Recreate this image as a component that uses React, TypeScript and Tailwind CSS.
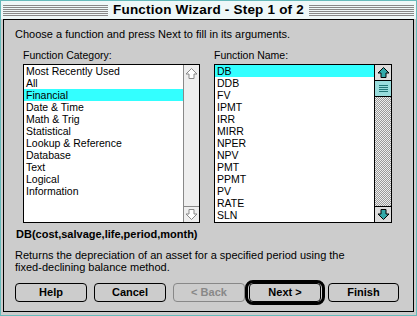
import React from "react";

// Mac OS 8 style "Function Wizard" dialog

const CATEGORIES = [
  "Most Recently Used",
  "All",
  "Financial",
  "Date & Time",
  "Math & Trig",
  "Statistical",
  "Lookup & Reference",
  "Database",
  "Text",
  "Logical",
  "Information",
];

const FUNCTIONS = [
  "DB",
  "DDB",
  "FV",
  "IPMT",
  "IRR",
  "MIRR",
  "NPER",
  "NPV",
  "PMT",
  "PPMT",
  "PV",
  "RATE",
  "SLN",
];

function Arrow({ down, active }: { down?: boolean; active?: boolean }) {
  return (
    <svg width="13" height="13" viewBox="0 0 13 13" className={down ? "rotate-180" : ""}>
      <path
        d="M6.5 1.5L12 7H9V11.5H4V7H1Z"
        fill={active ? "#33aaaa" : "#ffffff"}
        stroke={active ? "#000000" : "#888888"}
        strokeWidth="1"
        strokeLinejoin="miter"
      />
    </svg>
  );
}

function ListBox({
  items,
  selected,
  active,
  width,
}: {
  items: string[];
  selected: number;
  active?: boolean;
  width: string;
}) {
  return (
    <div className={`${width} h-[159px] flex border border-black bg-white`}>
      <div className="flex-1 overflow-hidden">
        {items.map((item, i) => (
          <div
            key={item}
            className={`h-[12px] pl-[2px] leading-[12px] text-[10.5px] whitespace-nowrap ${
              i === selected ? "bg-[#33ffff]" : ""
            }`}
          >
            {item}
          </div>
        ))}
      </div>
      {active ? (
        <div className="w-[17px] flex flex-col border-l border-black bg-[image:repeating-conic-gradient(#999999_0_25%,#eeeeee_0_50%)] bg-[length:2px_2px]">
          <div className="h-[16px] flex items-center justify-center bg-[#dddddd] border-b border-black">
            <Arrow active />
          </div>
          <div className="h-[16px] flex flex-col items-center justify-center gap-[1px] bg-[#99dddd] border-b border-black">
            {[0, 1, 2, 3].map((n) => (
              <div key={n} className="w-[9px] h-[1px] bg-[#227777]" />
            ))}
          </div>
          <div className="flex-1" />
          <div className="h-[16px] flex items-center justify-center bg-[#dddddd] border-t border-black">
            <Arrow down active />
          </div>
        </div>
      ) : (
        <div className="w-[16px] flex flex-col border-l border-[#888888] bg-[#eeeeee]">
          <div className="h-[16px] flex items-center justify-center">
            <Arrow />
          </div>
          <div className="flex-1" />
          <div className="h-[16px] flex items-center justify-center border-t border-[#888888]">
            <Arrow down />
          </div>
        </div>
      )}
    </div>
  );
}

function Btn({ label, width, disabled }: { label: string; width: string; disabled?: boolean }) {
  return (
    <div
      className={`${width} h-[19px] flex items-center justify-center rounded-[4px] border bg-[#cccccc] text-[11px] font-bold ${
        disabled ? "border-[#888888] text-[#888888]" : "border-black text-black"
      }`}
    >
      {label}
    </div>
  );
}

export default function App() {
  return (
    <div className="w-[417px] h-[316px] flex flex-col bg-[#cccccc] border border-[#66bbbb] font-['Liberation_Sans',Arial,sans-serif] text-black select-none">
      {/* Title bar */}
      <div className="h-[18px] flex items-center px-[2px] bg-[#eef8f8]">
        <div className="flex-1 h-[11px] bg-[repeating-linear-gradient(to_bottom,#888888_0_1px,transparent_1px_2px)]" />
        <div className="px-[5px] text-[13.5px] font-bold leading-[18px] tracking-[0.2px]">
          Function Wizard - Step 1 of 2
        </div>
        <div className="flex-1 h-[11px] bg-[repeating-linear-gradient(to_bottom,#888888_0_1px,transparent_1px_2px)]" />
      </div>

      {/* Content */}
      <div className="flex-1 mx-[2px] mb-[3px] border border-black bg-[#cccccc] pl-[11px] pt-[8px]">
        <div className="text-[11px] leading-[12px]">
          Choose a function and press Next to fill in its arguments.
        </div>

        <div className="flex mt-[9px] ml-[8px] gap-[14px]">
          <div className="flex flex-col">
            <div className="text-[10.5px] leading-[12px] mb-[3px]">Function Category:</div>
            <ListBox items={CATEGORIES} selected={2} width="w-[177px]" />
          </div>
          <div className="flex flex-col">
            <div className="text-[10.5px] leading-[12px] mb-[3px]">Function Name:</div>
            <ListBox items={FUNCTIONS} selected={0} active width="w-[178px]" />
          </div>
        </div>

        <div className="mt-[5px] ml-[1px] text-[11px] leading-[12px] font-bold">
          DB(cost,salvage,life,period,month)
        </div>

        <div className="mt-[9px] text-[11px] leading-[12px]">
          Returns the depreciation of an asset for a specified period using the
          <br />
          fixed-declining balance method.
        </div>

        <div className="flex items-center mt-[7px]">
          <Btn label="Help" width="w-[72px]" />
          <div className="ml-[7px]">
            <Btn label="Cancel" width="w-[72px]" />
          </div>
          <div className="ml-[7px]">
            <Btn label="< Back" width="w-[72px]" disabled />
          </div>
          <div className="w-[80px] h-[25px] flex items-center justify-center rounded-[8px] border-[3px] border-black">
            <Btn label="Next >" width="w-[72px]" />
          </div>
          <div className="ml-[3px]">
            <Btn label="Finish" width="w-[71px]" />
          </div>
        </div>
      </div>
    </div>
  );
}
